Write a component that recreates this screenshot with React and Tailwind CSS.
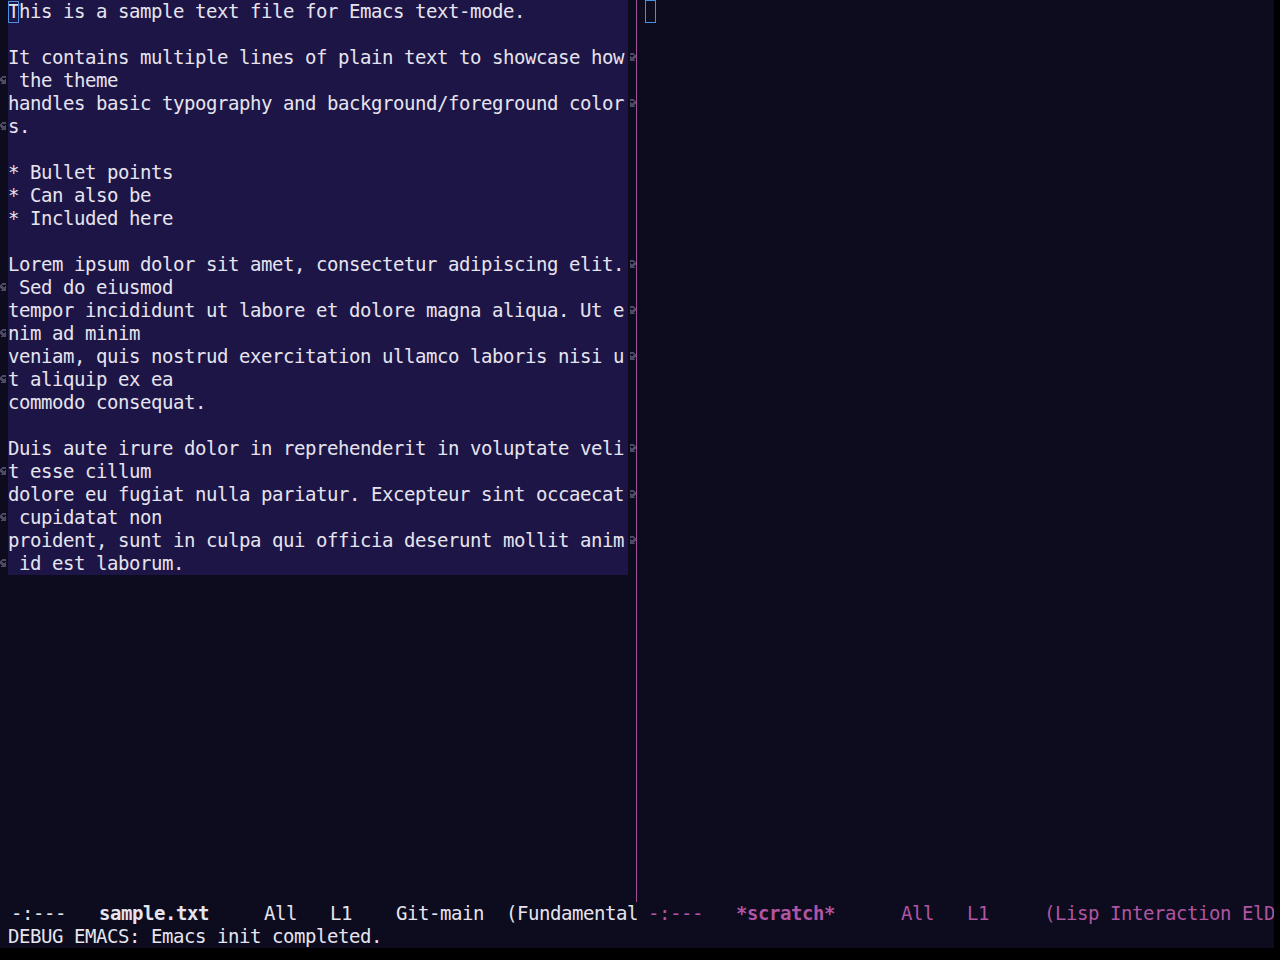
const ROWS = [
  { t: "This is a sample text file for Emacs text-mode.", cursor: true },
  { t: "" },
  { t: "It contains multiple lines of plain text to showcase how", r: true },
  { t: " the theme", l: true },
  { t: "handles basic typography and background/foreground color", r: true },
  { t: "s.", l: true },
  { t: "" },
  { t: "* Bullet points" },
  { t: "* Can also be" },
  { t: "* Included here" },
  { t: "" },
  { t: "Lorem ipsum dolor sit amet, consectetur adipiscing elit.", r: true },
  { t: " Sed do eiusmod", l: true },
  { t: "tempor incididunt ut labore et dolore magna aliqua. Ut e", r: true },
  { t: "nim ad minim", l: true },
  { t: "veniam, quis nostrud exercitation ullamco laboris nisi u", r: true },
  { t: "t aliquip ex ea", l: true },
  { t: "commodo consequat." },
  { t: "" },
  { t: "Duis aute irure dolor in reprehenderit in voluptate veli", r: true },
  { t: "t esse cillum", l: true },
  { t: "dolore eu fugiat nulla pariatur. Excepteur sint occaecat", r: true },
  { t: " cupidatat non", l: true },
  { t: "proident, sunt in culpa qui officia deserunt mollit anim", r: true },
  { t: " id est laborum.", l: true },
];

const RIGHT_BITS = [0x3c, 0x3e, 0x03, 0x27, 0x3f, 0x3e, 0x3c, 0x3e];
const LEFT_BITS = [0x3c, 0x7c, 0xc0, 0xe4, 0xfc, 0x7c, 0x3c, 0x7c];

function Curly({ bits }) {
  const rects = [];
  bits.forEach((b, y) => {
    for (let x = 0; x < 8; x++) {
      if (b & (0x80 >> x)) rects.push(<rect key={`${x}-${y}`} x={x} y={y} width="1" height="1" />);
    }
  });
  return (
    <svg width="8" height="8" viewBox="0 0 8 8" shapeRendering="crispEdges" fill="#4d4864">
      {rects}
    </svg>
  );
}

function Row({ row }) {
  return (
    <div className="flex h-[23px]">
      <div className="w-[8px] pt-[7px]">{row.l && <Curly bits={LEFT_BITS} />}</div>
      <div className="w-[620px] bg-[#1e1547] whitespace-pre overflow-hidden text-[#e6e4ee]">
        {row.cursor ? (
          <>
            <span className="relative">
              T
              <span className="absolute left-0 top-[1px] w-[11px] h-[22px] border border-[#4a8fe0]" />
            </span>
            {row.t.slice(1)}
          </>
        ) : (
          row.t
        )}
      </div>
      <div className="w-[8px] pt-[7px]">{row.r && <Curly bits={RIGHT_BITS} />}</div>
    </div>
  );
}

export default function App() {
  return (
    <div className="w-[1280px] h-[960px] bg-black font-['DejaVu_Sans_Mono',monospace] text-[19px] leading-[23px] tracking-[-0.438px]">
      <div className="w-[1274px] h-[948px] bg-[#0d0b1e] flex flex-col">
        <div className="flex h-[902px]">
          <div className="w-[636px] flex flex-col">
            {ROWS.map((row, i) => (
              <Row key={i} row={row} />
            ))}
          </div>
          <div className="w-px bg-[#a2509a]" />
          <div className="flex-1 pl-[8px]">
            <div className="w-[11px] h-[23px] border border-[#4a8fe0]" />
          </div>
        </div>
        <div className="flex h-[23px] whitespace-pre">
          <div className="w-[637px] overflow-hidden text-[#e6e4ee]">
            {" -:---   "}
            <span className="font-bold">sample.txt</span>
            {"     All   L1    Git-main  (Fundamental"}
          </div>
          <div className="flex-1 overflow-hidden text-[#b055a2]">
            {" -:---   "}
            <span className="font-bold">*scratch*</span>
            {"      All   L1     (Lisp Interaction ElD"}
          </div>
        </div>
        <div className="h-[23px] pl-[8px] whitespace-pre text-[#e6e4ee]">
          DEBUG EMACS: Emacs init completed.
        </div>
      </div>
    </div>
  );
}
